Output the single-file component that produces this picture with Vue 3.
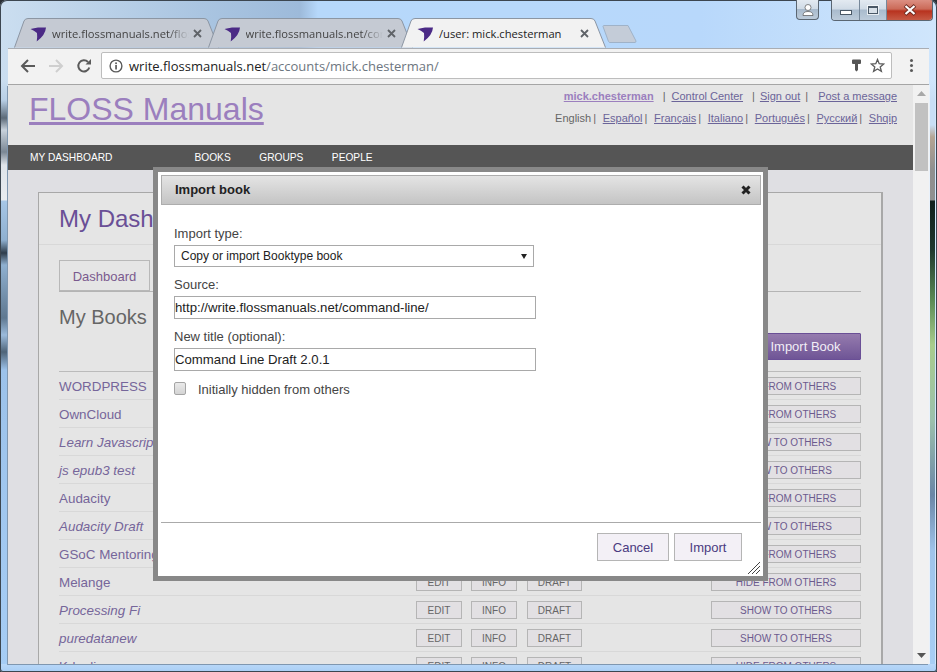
<script setup>
import { ref } from 'vue'

const tabs = ref([
  { title: 'write.flossmanuals.net/floss', active: false },
  { title: 'write.flossmanuals.net/command', active: false },
  { title: '/user: mick.chesterman', active: true }
])

const languages = ['Español', 'Français', 'Italiano', 'Português', 'Русский', 'Shqip']

const books = ref([
  { name: 'WORDPRESS', hidden: false },
  { name: 'OwnCloud', hidden: false },
  { name: 'Learn Javascript', hidden: true },
  { name: 'js epub3 test', hidden: true },
  { name: 'Audacity', hidden: false },
  { name: 'Audacity Draft', hidden: true },
  { name: 'GSoC Mentoring', hidden: false },
  { name: 'Melange', hidden: false },
  { name: 'Processing Fi', hidden: true },
  { name: 'puredatanew', hidden: true },
  { name: 'Kdenlive', hidden: false }
])

const source = ref('http://write.flossmanuals.net/command-line/')
const newTitle = ref('Command Line Draft 2.0.1')
const hiddenBook = ref(false)
</script>

<template>
  <div class="window">
    <!-- tab strip -->
    <div class="strip">
      <div v-for="tab in tabs" class="tab" :class="{ active: tab.active }">
        <svg class="tabShape" width="205" height="30" viewBox="0 0 205 30">
          <path d="M0.5 29.5 L10 3 Q11 0.5 14 0.5 L190 0.5 Q193 0.5 194 3 L204.5 29.5" />
        </svg>
        <svg class="favicon" width="17" height="15" viewBox="0 0 17 15">
          <path d="M0.500 2 Q4 1 8 0.500 L16 0.500 Q15.500 8 6.700 14.500 Q7.500 10 7 6 Q4 3.500 0.500 2Z" fill="#4b2a86" />
        </svg>
        <span class="tabTitle">{{ tab.title }}</span>
        <svg class="tabClose" width="9" height="9" viewBox="0 0 9 9">
          <path d="M1 1 L8 8 M8 1 L1 8" stroke="#5f6368" stroke-width="1.800" />
        </svg>
      </div>
      <svg class="newTab" width="35" height="18" viewBox="0 0 35 18">
        <path d="M1 1.500 Q1 0.500 2 0.500 L26 0.500 L34 16 Q34 17.500 33 17.500 L8 17.500 Q7 17.500 6.500 16.500Z" fill="#c4ccd8" stroke="#9fb2c8" />
      </svg>
      <div class="captionBtns">
        <div class="capBtn userBtn">
          <svg width="12" height="12" viewBox="0 0 12 12">
            <circle cx="6" cy="3.500" r="3" fill="#fff" stroke="#555" stroke-width="0.700" />
            <path d="M1 11.500 Q1 7.500 6 7.500 Q11 7.500 11 11.500Z" fill="#fff" stroke="#555" stroke-width="0.700" />
          </svg>
        </div>
        <div class="capGroup">
          <div class="capBtn minBtn"><span class="minGlyph"></span></div>
          <div class="capBtn maxBtn"><span class="maxGlyph"></span></div>
          <div class="capBtn closeBtn">
            <svg width="14" height="12" viewBox="0 0 14 12">
              <path d="M2 1.500 L12 10.500 M12 1.500 L2 10.500" stroke="#6e2a20" stroke-width="3.800" />
              <path d="M2.500 2 L11.500 10 M11.500 2 L2.500 10" stroke="#fff" stroke-width="2.200" />
            </svg>
          </div>
        </div>
      </div>
    </div>

    <!-- toolbar -->
    <div class="toolbar">
      <svg class="navIcon" width="16" height="16" viewBox="0 0 16 16">
        <path d="M15 8 H2.500 M8 2 L2 8 L8 14" fill="none" stroke="#5a5a5a" stroke-width="2" />
      </svg>
      <svg class="navIcon" width="16" height="16" viewBox="0 0 16 16">
        <path d="M1 8 H13.500 M8 2 L14 8 L8 14" fill="none" stroke="#cfcfcf" stroke-width="2" />
      </svg>
      <svg class="navIcon" width="16" height="16" viewBox="0 0 16 16">
        <path d="M13.300 9.500 A5.600 5.600 0 1 1 12 4" fill="none" stroke="#5a5a5a" stroke-width="2" />
        <path d="M9.500 6.500 H15 V1Z" fill="#5a5a5a" />
      </svg>
      <div class="omnibox">
        <svg width="14" height="14" viewBox="0 0 14 14">
          <circle cx="7" cy="7" r="5.900" fill="none" stroke="#5a5a5a" stroke-width="1.400" />
          <rect x="6.200" y="6" width="1.700" height="4.500" fill="#5a5a5a" />
          <rect x="6.200" y="3.400" width="1.700" height="1.700" fill="#5a5a5a" />
        </svg>
        <span class="url"><span class="host">write.flossmanuals.net</span>/accounts/mick.chesterman/</span>
        <svg class="keyIcon" width="9" height="13" viewBox="0 0 9 13">
          <path d="M1 0.500 H8 Q9 0.500 9 1.500 V4 Q9 5 8 5 H6 V11 L4.500 12.500 L3 11 V5 H1 Q0 5 0 4 V1.500 Q0 0.500 1 0.500Z" fill="#555" />
        </svg>
        <svg width="15" height="15" viewBox="0 0 15 15">
          <path d="M7.500 1.500 L9.200 5.700 L13.800 6 L10.200 8.900 L11.400 13.400 L7.500 10.900 L3.600 13.400 L4.800 8.900 L1.200 6 L5.800 5.700Z" fill="none" stroke="#5a5a5a" stroke-width="1.300" />
        </svg>
      </div>
      <div class="menuDots"><i></i><i></i><i></i></div>
    </div>

    <!-- page -->
    <div class="viewport">
      <div class="page">
        <header class="siteHeader">
          <a class="logo">FLOSS Manuals</a>
          <div class="headerLinks">
            <div class="userLinks">
              <a class="userName">mick.chesterman</a>
              <span class="sep wide first">|</span>
              <a>Control Center</a>
              <span class="sep wide">|</span>
              <a>Sign out</a>
              <span class="sep last">|</span>
              <a class="post">Post a message</a>
            </div>
            <div class="langLinks">
              <span class="curLang">English</span>
              <template v-for="(lang, i) in languages">
                <span class="sep">|</span>
                <a>{{ lang }}</a>
              </template>
            </div>
          </div>
        </header>

        <nav class="siteNav">
          <span class="navFirst">MY DASHBOARD</span>
          <span>BOOKS</span>
          <span>GROUPS</span>
          <span>PEOPLE</span>
        </nav>

        <div class="card">
          <h1 class="cardTitle">My Dashboard</h1>
          <div class="cardBody">
            <div class="pageTabs">
              <div class="pageTab">Dashboard</div>
            </div>
            <div class="booksHead">
              <h2>My Books</h2>
              <div class="importBtn">Import Book</div>
            </div>
            <div class="bookTable">
              <div v-for="book in books" class="bookRow">
                <span class="bookName" :class="{ draft: book.hidden }">{{ book.name }}</span>
                <span class="rowBtn editBtn">EDIT</span>
                <span class="rowBtn infoBtn">INFO</span>
                <span class="rowBtn draftBtn">DRAFT</span>
                <span class="rowBtn visBtn">{{ book.hidden ? 'SHOW TO OTHERS' : 'HIDE FROM OTHERS' }}</span>
              </div>
            </div>
          </div>
        </div>
      </div>

      <div class="scrollbar">
        <svg width="9" height="5" viewBox="0 0 9 5"><path d="M0 5 L4.500 0 L9 5Z" fill="#a8a8a8" /></svg>
        <div class="thumb"></div>
        <svg class="downArrow" width="9" height="5" viewBox="0 0 9 5"><path d="M0 0 L4.500 5 L9 0Z" fill="#555" /></svg>
      </div>
    </div>

    <!-- import dialog -->
    <div class="dialog">
      <div class="dialogTitle">
        <span>Import book</span>
        <svg width="10" height="10" viewBox="0 0 10 10">
          <path d="M1.500 1.500 L8.500 8.500 M8.500 1.500 L1.500 8.500" stroke="#222" stroke-width="3" />
        </svg>
      </div>
      <div class="dialogForm">
        <label class="fieldLabel">Import type:</label>
        <div class="selectBox">
          <span>Copy or import Booktype book</span>
          <svg width="6" height="5" viewBox="0 0 6 5"><path d="M0 0 H6 L3 5Z" fill="#222" /></svg>
        </div>
        <label class="fieldLabel">Source:</label>
        <input v-model="source" class="textInput" type="text">
        <label class="fieldLabel">New title (optional):</label>
        <input v-model="newTitle" class="textInput" type="text">
        <label class="checkRow">
          <input v-model="hiddenBook" class="check" type="checkbox">
          Initially hidden from others
        </label>
      </div>
      <div class="dialogFooter">
        <div class="dlgBtn cancelBtn">Cancel</div>
        <div class="dlgBtn okBtn">Import</div>
        <svg class="grip" width="12" height="12" viewBox="0 0 12 12">
          <path d="M0 12 L12 0 M4 12 L12 4 M8 12 L12 8" stroke="#444" stroke-width="1" />
        </svg>
      </div>
    </div>
  </div>
</template>

<style>
html, body {
  margin: 0;
  overflow: hidden;
  background: #2a2f35;
}
</style>

<style scoped>
.window {
  position: relative;
  display: flex;
  flex-direction: column;
  width: 937px;
  height: 672px;
  padding: 0 8px 8px;
  box-sizing: border-box;
  overflow: hidden;
  border-radius: 7px 7px 3px 3px;
  background:
    linear-gradient(#b9d8f9, #a9cef5) no-repeat bottom / 100% 8px,
    linear-gradient(180deg, transparent 80px, #c8def5 100px, #c8def5 125px, #b5a594 137px, #8f8f8f 170px, #8f9090 200px, #101f1c 201px, #20392f 250px, #5a8a55 300px, #a8cc8c 345px, #9cc0ac 420px, #6a86a6 495px, #9fc4ea 551px, #a8cff5 100%) no-repeat 930px 0 / 5px 100%,
    linear-gradient(180deg, transparent 80px, #b8cfe6 100px, #5c6a78 118px, #c8d2dc 130px, #7a8794 152px, #dfe4ea 165px, #e8ecf0 200px, #a6c6e6 201px, #8fb0d0 240px, #2e3c4a 253px, #8fb0d0 265px, #5f7890 318px, #9bbbdc 335px, #4f6478 352px, #9cc2ea 370px, #a6cdf5 100%) no-repeat 1px 0 / 6px 100%,
    linear-gradient(90deg, #cbdef0 0, #aac5e1 200px, #9dbada 300px, #b6d8fb 318px, #b8d8fb 700px, #d0e6fc 100%);
  box-shadow: inset 0 0 0 1px #3c4650;
  font-family: "Liberation Sans", Arial, sans-serif;
}

/* tab strip */
.strip {
  display: flex;
  align-items: flex-end;
  height: 48px;
  padding-left: 6px;
  flex-shrink: 0;
}
.tab {
  position: relative;
  display: flex;
  align-items: center;
  width: 205px;
  height: 30px;
  margin-right: -11.500px;
  padding: 0 17px 0 16px;
  box-sizing: border-box;
  font-family: "Open Sans", sans-serif;
  font-size: 11.200px;
  color: #444;
}
.tabShape {
  position: absolute;
  left: 0;
  top: 0;
  fill: #c5cad3;
  stroke: #8c96a3;
}
.tab.active {
  z-index: 1;
  color: #222;
}
.tab.active .tabShape {
  fill: #f2f2f2;
}
.favicon {
  position: relative;
  flex-shrink: 0;
  margin: 3px 5px 0 0;
}
.tabTitle {
  position: relative;
  flex: 1;
  white-space: nowrap;
  overflow: hidden;
  -webkit-mask-image: linear-gradient(90deg, #000 85%, transparent 100%);
  mask-image: linear-gradient(90deg, #000 85%, transparent 100%);
}
.tab.active .tabTitle {
  -webkit-mask-image: none;
  mask-image: none;
}
.tabClose {
  position: relative;
  margin-left: 4px;
  flex-shrink: 0;
}
.newTab {
  margin: 0 0 5px 7px;
}
.captionBtns {
  display: flex;
  align-items: flex-start;
  align-self: flex-start;
  margin-left: auto;
  margin-right: -4px;
  gap: 12px;
}
.capBtn {
  display: flex;
  align-items: center;
  justify-content: center;
  height: 20px;
  box-sizing: border-box;
  background: linear-gradient(#e3eaf1 0, #d0dbe6 45%, #a9bbcd 50%, #bccbda 100%);
}
.userBtn {
  width: 23px;
  border: 1px solid #5a6672;
  border-top: 0;
  border-radius: 0 0 4px 4px;
}
.capGroup {
  display: flex;
  border: 1px solid #5a6672;
  border-top: 0;
  border-radius: 0 0 4px 4px;
  overflow: hidden;
}
.minBtn,
.maxBtn {
  width: 27px;
}
.maxBtn {
  border-left: 1px solid #76889a;
  border-right: 1px solid #76889a;
  width: 28px;
}
.minGlyph {
  display: block;
  width: 10px;
  height: 3px;
  margin-top: 5px;
  background: #fff;
  border: 1px solid #4a5866;
}
.maxGlyph {
  display: block;
  width: 8px;
  height: 5px;
  background: #d8e0e8;
  border: 1px solid #4a5866;
  border-top-width: 2px;
  outline: 1px solid rgba(255, 255, 255, 0.7);
}
.closeBtn {
  width: 45px;
  background: linear-gradient(#dc8f82 0, #cb6a58 45%, #b8331f 55%, #c65a45 100%);
}

/* toolbar */
.toolbar {
  display: flex;
  align-items: center;
  height: 37px;
  padding: 0 0 2px 12px;
  box-sizing: border-box;
  flex-shrink: 0;
  background: #f2f2f2;
  border-top: 1px solid #a9adb3;
  border-bottom: 1px solid #a5a5a5;
}
.navIcon {
  margin-right: 12px;
  flex-shrink: 0;
}
.navIcon:nth-child(3) {
  margin-right: 9px;
}
.omnibox {
  display: flex;
  align-items: center;
  gap: 6px;
  width: 791px;
  height: 27px;
  padding: 0 6px 0 7px;
  box-sizing: border-box;
  background: #fff;
  border: 1px solid #bdbdbd;
  border-radius: 2px;
}
.url {
  flex: 1;
  font-family: "Open Sans", sans-serif;
  font-size: 13px;
  color: #6d7680;
}
.host {
  color: #222;
}
.keyIcon {
  margin-right: 3px;
}
.menuDots {
  display: flex;
  flex-direction: column;
  gap: 2px;
  margin-left: 18px;
}
.menuDots i {
  width: 3px;
  height: 3px;
  border-radius: 50%;
  background: #5a5a5a;
}

/* page */
.viewport {
  display: flex;
  flex: 1;
  min-height: 0;
  box-shadow: -1px 1px 0 #7f97b0, 1px 0 0 #e8f1fb;
}
.page {
  flex: 1;
  min-width: 0;
  overflow: hidden;
  background: #dfdfe3;
}
.scrollbar {
  display: flex;
  flex-direction: column;
  align-items: center;
  width: 16px;
  padding-top: 6px;
  box-sizing: border-box;
  background: #f1f1f1;
}
.thumb {
  width: 13px;
  height: 68px;
  margin-top: 7px;
  background: #c1c1c1;
}
.downArrow {
  margin-top: auto;
  margin-bottom: 6px;
}
.siteHeader {
  display: flex;
  justify-content: space-between;
  height: 60px;
  padding: 0 16px 0 21px;
  box-sizing: border-box;
  background: #e5e5e5;
}
.logo {
  margin-top: 6px;
  font-size: 32px;
  line-height: 37px;
  color: #9b7fbe;
  text-decoration: underline;
}
.headerLinks {
  font-size: 11px;
  color: #666;
  text-align: right;
}
.headerLinks a {
  color: #6b6499;
  text-decoration: underline;
}
.userLinks {
  margin-top: 4px;
  line-height: 14px;
}
.userLinks a.userName {
  font-weight: bold;
  color: #9b7fbe;
}
.langLinks {
  margin-top: 8px;
  line-height: 14px;
}
.sep {
  margin: 0 6.700px 0 2px;
  color: #666;
}
.sep.wide {
  margin: 0 5px 0 9px;
}
.sep.wide.first {
  margin-right: 6px;
}
.sep.last {
  margin: 0 0 0 5px;
}
.userLinks a.post {
  margin-left: 10px;
}
.siteNav {
  display: flex;
  align-items: center;
  gap: 28.500px;
  height: 25px;
  padding-left: 22px;
  background: #555;
  font-size: 10.200px;
  color: #fff;
}
.navFirst {
  margin-right: 53.500px;
}
.card {
  margin: 22px 30px 0 30px;
  height: 600px;
  background: #e5e5e5;
  border: 2px solid #a8a8a8;
  border-width: 1px 2px 0 1px;
}
.cardTitle {
  height: 52px;
  margin: 0;
  padding: 12px 0 0 20px;
  box-sizing: border-box;
  border-bottom: 1px solid #d8d8d8;
  font-size: 24px;
  font-weight: normal;
  line-height: 28px;
  color: #6a4f96;
}
.cardBody {
  padding: 15px 20px 0;
}
.pageTabs {
  display: flex;
  height: 31px;
  border-bottom: 1px solid #b4b4b4;
}
.pageTab {
  display: flex;
  align-items: center;
  justify-content: center;
  width: 91px;
  padding-top: 1px;
  box-sizing: border-box;
  border: 1px solid #b8b8b8;
  font-size: 13px;
  color: #7a5a8e;
}
.booksHead {
  display: flex;
  align-items: flex-start;
  justify-content: space-between;
  height: 79px;
}
.booksHead h2 {
  margin: 13px 0 0;
  font-size: 20px;
  font-weight: normal;
  line-height: 25px;
  color: #666;
}
.importBtn {
  display: flex;
  align-items: center;
  justify-content: center;
  width: 111px;
  height: 27px;
  margin-top: 41px;
  box-sizing: border-box;
  border: 1px solid #6a4f96;
  border-radius: 1px;
  background: linear-gradient(#957bae, #6f5596);
  font-size: 13px;
  color: #f2eef6;
}
.bookTable {
  border-top: 1px solid #bbb;
}
.bookRow {
  display: flex;
  align-items: center;
  height: 28px;
  padding-top: 1px;
  box-sizing: border-box;
  border-bottom: 1px solid #d8d8d8;
}
.bookName {
  flex: 1;
  font-size: 13.400px;
  color: #76669a;
}
.bookName.draft {
  font-style: italic;
}
.rowBtn {
  display: flex;
  align-items: center;
  justify-content: center;
  height: 18px;
  box-sizing: border-box;
  border: 1px solid #b5b5b5;
  background: #e2e0e3;
  font-size: 10px;
  color: #666;
}
.editBtn {
  width: 46px;
}
.infoBtn {
  width: 46px;
  margin-left: 9px;
}
.draftBtn {
  width: 55px;
  margin-left: 10px;
}
.visBtn {
  width: 150px;
  margin-left: 129px;
  color: #6c5a8e;
}

/* import dialog */
.dialog {
  position: absolute;
  left: 153px;
  top: 167px;
  display: flex;
  flex-direction: column;
  width: 615px;
  height: 414px;
  padding: 3px 2px 0 3px;
  box-sizing: border-box;
  background: #fff;
  border: 5px solid #888;
}
.dialogTitle {
  display: flex;
  align-items: center;
  justify-content: space-between;
  height: 30px;
  padding: 0 9px 2px 13px;
  box-sizing: border-box;
  flex-shrink: 0;
  border: 1px solid #adadad;
  background: linear-gradient(#e4e4e4, #c4c4c4);
  font-size: 13px;
  font-weight: bold;
  color: #222;
}
.dialogTitle svg {
  margin-top: 2px;
}
.dialogForm {
  display: flex;
  flex-direction: column;
  align-items: flex-start;
  flex: 1;
  padding: 21px 0 0 13px;
  font-size: 13px;
  color: #444;
}
.fieldLabel {
  line-height: 15px;
  margin-top: 10px;
  margin-bottom: 4px;
}
.fieldLabel:first-child {
  margin-top: 0;
}
.selectBox {
  display: flex;
  align-items: center;
  justify-content: space-between;
  width: 360px;
  height: 22px;
  padding: 0 6px;
  box-sizing: border-box;
  border: 1px solid #a9a9a9;
  font-size: 12px;
  color: #222;
}
.textInput {
  width: 362px;
  height: 23px;
  padding: 0;
  margin: 0;
  box-sizing: border-box;
  border: 1px solid #a9a9a9;
  font-family: inherit;
  font-size: 13.200px;
  color: #222;
  outline: none;
}
.checkRow {
  display: flex;
  align-items: center;
  margin-top: 10px;
  line-height: 17px;
}
.check {
  appearance: none;
  width: 12px;
  height: 13px;
  margin: 0 12px 2px 0;
  box-sizing: border-box;
  border: 1px solid #a5a5a5;
  border-radius: 2px;
  background: linear-gradient(#eaeaea, #d4d4d4);
}
.dialogFooter {
  position: relative;
  display: flex;
  justify-content: flex-end;
  gap: 5px;
  height: 54px;
  padding: 10px 19px 0 0;
  box-sizing: border-box;
  flex-shrink: 0;
  border-top: 1px solid #aaa;
}
.dlgBtn {
  display: flex;
  align-items: center;
  justify-content: center;
  height: 28px;
  box-sizing: border-box;
  border: 1px solid #b5b5b5;
  background: #f3f0f6;
  font-size: 13px;
  color: #4a3a80;
}
.cancelBtn {
  width: 72px;
}
.okBtn {
  width: 68px;
}
.grip {
  position: absolute;
  right: 1px;
  bottom: 2px;
}
</style>
